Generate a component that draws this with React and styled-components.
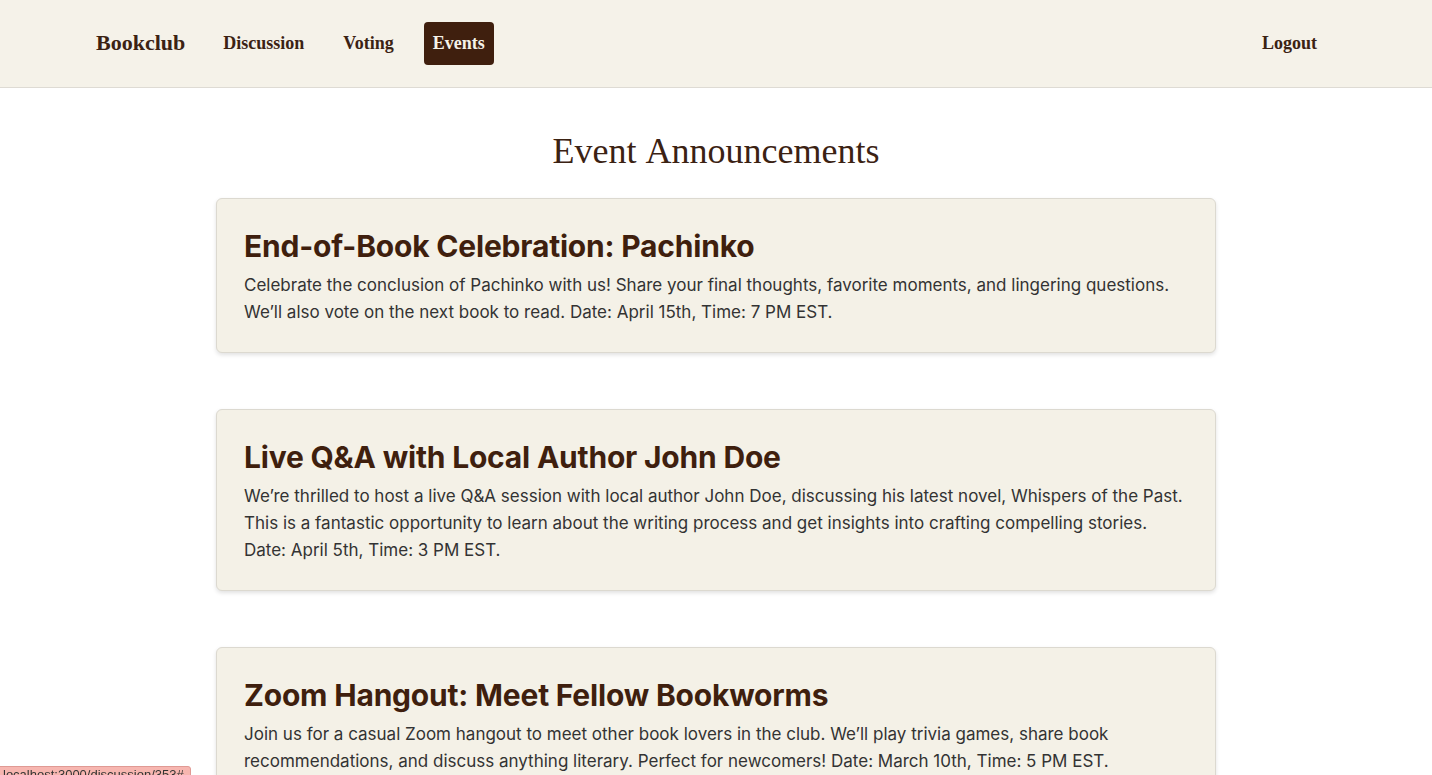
import React from 'react'
import styled, { createGlobalStyle } from 'styled-components'

const events = [
  {
    title: 'End-of-Book Celebration: Pachinko',
    text: 'Celebrate the conclusion of Pachinko with us! Share your final thoughts, favorite moments, and lingering questions. We’ll also vote on the next book to read. Date: April 15th, Time: 7 PM EST.',
  },
  {
    title: 'Live Q&A with Local Author John Doe',
    text: 'We’re thrilled to host a live Q&A session with local author John Doe, discussing his latest novel, Whispers of the Past. This is a fantastic opportunity to learn about the writing process and get insights into crafting compelling stories. Date: April 5th, Time: 3 PM EST.',
  },
  {
    title: 'Zoom Hangout: Meet Fellow Bookworms',
    text: 'Join us for a casual Zoom hangout to meet other book lovers in the club. We’ll play trivia games, share book recommendations, and discuss anything literary. Perfect for newcomers! Date: March 10th, Time: 5 PM EST.',
  },
]

const App = () => {
  return (
    <>
      <GlobalStyle />
      <Navbar>
        <NavLeft>
          <Brand href="#">Bookclub</Brand>
          <NavLink href="#">Discussion</NavLink>
          <NavLink href="#">Voting</NavLink>
          <NavLink href="#" $active>Events</NavLink>
        </NavLeft>
        <NavLink href="#">Logout</NavLink>
      </Navbar>
      <Main>
        <PageTitle>Event Announcements</PageTitle>
        <CardList>
          {events.map((ev) => (
            <Card key={ev.title}>
              <CardTitle>{ev.title}</CardTitle>
              <CardText>{ev.text}</CardText>
            </Card>
          ))}
        </CardList>
      </Main>
      <StatusBar>localhost:3000/discussion/353#</StatusBar>
    </>
  )
}

export default App

const GlobalStyle = createGlobalStyle`
  html, body {
    margin: 0;
    padding: 0;
    background: #fff;
  }
  body {
    font-family: "Liberation Serif", "Times New Roman", serif;
    color: #3b2213;
  }
  * { box-sizing: border-box; }
`

const Navbar = styled.nav`
  height: 88px;
  display: flex;
  align-items: center;
  justify-content: space-between;
  padding: 0 106px 1px 96px;
  background: #f5f2e9;
  border-bottom: 1px solid #dedbd4;
`

const NavLeft = styled.div`
  display: flex;
  align-items: center;
  gap: 21px;
`

const Brand = styled.a`
  font-family: "Liberation Serif", "Times New Roman", serif;
  font-weight: 700;
  font-size: 22px;
  color: #3b2213;
  text-decoration: none;
  margin-right: 8px;
`

const NavLink = styled.a`
  font-family: "Liberation Serif", "Times New Roman", serif;
  font-weight: 700;
  font-size: 18px;
  line-height: 19px;
  padding: 12px 9px;
  border-radius: 4px;
  text-decoration: none;
  color: ${(p) => (p.$active ? '#f5f2e9' : '#3b2213')};
  background: ${(p) => (p.$active ? '#3f1f0e' : 'transparent')};
`

const Main = styled.main`
  display: flex;
  flex-direction: column;
  align-items: center;
  padding-top: 40px;
`

const PageTitle = styled.h1`
  margin: 0 0 24px;
  font-family: "Liberation Serif", "Times New Roman", serif;
  font-weight: 400;
  font-size: 36px;
  line-height: 46px;
  word-spacing: 2px;
  color: #3b2213;
`

const CardList = styled.div`
  width: 1000px;
  display: flex;
  flex-direction: column;
  gap: 56px;
`

const Card = styled.section`
  background: #f4f1e7;
  border: 1px solid #dcd9d0;
  border-radius: 6px;
  box-shadow: 0 2px 4px rgba(0, 0, 0, 0.12);
  padding: 29px 26px 26px 27px;
`

const CardTitle = styled.h2`
  margin: 0 0 8px;
  font-family: Inter, "Noto Sans", sans-serif;
  font-weight: 700;
  font-size: 30px;
  line-height: 36px;
  letter-spacing: -0.2px;
  color: #3f1f0e;
`

const CardText = styled.p`
  margin: 0;
  font-family: Inter, "Noto Sans", sans-serif;
  font-size: 17px;
  line-height: 27px;
  color: #333;
`

const StatusBar = styled.div`
  position: fixed;
  left: -4px;
  bottom: -9px;
  height: 18px;
  padding: 0 6px;
  background: #f7b6b0;
  border: 1px solid #e09a94;
  border-radius: 3px;
  font-family: "Liberation Sans", Arial, sans-serif;
  font-size: 13px;
  line-height: 16px;
  color: #333;
`
